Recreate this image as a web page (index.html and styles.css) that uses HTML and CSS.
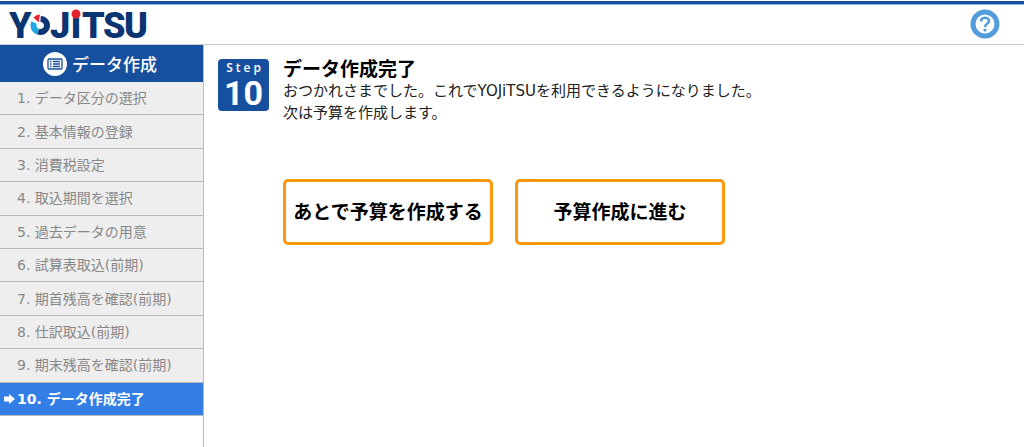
FILE: index.html
```html
<!DOCTYPE html>
<html lang="ja">
  <head>
    <meta charset="utf-8">
    <title>YOJiTSU</title>
    <link rel="stylesheet" href="styles.css">
  </head>
  <body>
    <header class="header">
      <a class="logo" href="#">
        <svg width="140" height="40" viewBox="0 0 140 40" role="img" aria-label="YOJiTSU">
          <g class="logo-text">
            <text x="-1" y="34">Y</text>
            <text x="40" y="34">J</text>
            <text x="61" y="34">i</text>
            <text x="72" y="34">T</text>
            <text x="93" y="34">S</text>
            <text x="114" y="34">U</text>
          </g>
          <!-- ring -->
          <path d="M30.500 15A6.500 6.500 0 1 1 28 27.500" fill="none" stroke="#0b3572" stroke-width="6"/>
          <path d="M28 27.500A6.500 6.500 0 0 1 24 18.500" fill="none" stroke="#1fa8e8" stroke-width="6"/>
          <path d="M29 19L23 13.500Q26 10 30.500 10Z" fill="#e7212b" stroke="#fff" stroke-width="0.800"/>
          <rect x="61" y="4" width="11" height="10" fill="#fff"/>
          <circle cx="66" cy="10" r="4.500" fill="#e7212b"/>
        </svg>
      </a>
      <a class="help" href="#" aria-label="ヘルプ">
        <svg width="30" height="30" viewBox="0 0 30 30">
          <circle cx="15" cy="15" r="12" fill="#fff" stroke="#529cdc" stroke-width="5"/>
          <path d="M11 12.500C11 7.500 19 7.500 19 12C19 15 15 14.500 15 18" fill="none" stroke="#529cdc" stroke-width="2.500"/>
          <circle cx="15" cy="21" r="1.600" fill="#529cdc"/>
        </svg>
      </a>
    </header>
    <div class="wrap">
      <nav class="side">
        <h2 class="side-title">
          <svg width="24" height="24" viewBox="0 0 24 24">
            <circle cx="12" cy="12" r="12" fill="#fff"/>
            <rect x="5" y="7" width="14" height="10" rx="1" fill="none" stroke="#174f9f" stroke-width="1.300"/>
            <path d="M7 9.500h1.500M7 12h1.500M7 14.500h1.500M10 9.500h7M10 12h7M10 14.500h7" stroke="#174f9f" stroke-width="1.300"/>
          </svg>
          データ作成
        </h2>
        <ul class="steps">
          <li>1. データ区分の選択</li>
          <li>2. 基本情報の登録</li>
          <li>3. 消費税設定</li>
          <li>4. 取込期間を選択</li>
          <li>5. 過去データの用意</li>
          <li>6. 試算表取込(前期)</li>
          <li>7. 期首残高を確認(前期)</li>
          <li>8. 仕訳取込(前期)</li>
          <li>9. 期末残高を確認(前期)</li>
          <li class="active">
            <svg width="11" height="10" viewBox="0 0 11 10"><path d="M0 2.500h5V0l6 5-6 5V7.500H0z" fill="#fff"/></svg>
            10. データ作成完了
          </li>
        </ul>
      </nav>
      <main class="main">
        <div class="step-badge">
          <span class="step-word">Step</span>
          <span class="step-num">10</span>
        </div>
        <div class="content">
          <h1>データ作成完了</h1>
          <p>おつかれさまでした。これでYOJiTSUを利用できるようになりました。<br>次は予算を作成します。</p>
          <div class="buttons">
            <button type="button">あとで予算を作成する</button>
            <button type="button">予算作成に進む</button>
          </div>
        </div>
      </main>
    </div>
  </body>
</html>
```
FILE: styles.css
```css
* {
	box-sizing: border-box;
}

body {
	margin: 0;
	min-height: 100vh;
	display: flex;
	flex-direction: column;
	background: #fff;
	color: #222;
	font-family: "DejaVu Sans", "Noto Sans CJK JP", sans-serif;
	font-size: 15px;
}

svg {
	display: block;
	flex: none;
	overflow: visible;
}

/* header */
.header {
	display: flex;
	justify-content: space-between;
	align-items: center;
	height: 44px;
	margin-top: 1px;
	padding: 0 24px 0 10px;
	border-top: 3px solid #174f9f;
	border-bottom: 1px solid #ccc;
	box-shadow: inset 0 1px 0 #8fbce6;
}

.logo-text {
	font-family: Roboto, sans-serif;
	font-size: 36px;
	font-weight: 900;
	fill: #0b3572;
}

.wrap {
	display: flex;
	flex: 1;
}

/* side menu */
.side {
	width: 204px;
	flex: none;
	border-right: 1px solid #bbb;
}

.side-title {
	display: flex;
	justify-content: center;
	align-items: center;
	gap: 5px;
	height: 37px;
	margin: 0;
	padding-right: 3px;
	background: #174f9f;
	color: #fff;
	font-size: 17px;
	font-weight: 500;
}

.steps {
	display: grid;
	grid-auto-rows: 1fr;
	min-height: 334px;
	margin: 0;
	padding: 0;
	list-style: none;
	font-size: 14px;
	line-height: 20px;
}

.steps li {
	display: flex;
	align-items: center;
	padding-left: 17px;
	border-bottom: 1px solid #bbb;
	background: #eee;
	color: #888;
}

.steps .active {
	gap: 2px;
	padding-left: 4px;
	background: #327de6;
	color: #fff;
	font-weight: bold;
}

/* main area */
.main {
	display: flex;
	flex: 1;
	align-items: flex-start;
	gap: 14px;
	padding: 13px 14px;
}

.step-badge {
	display: flex;
	flex-direction: column;
	align-items: center;
	width: 51px;
	margin-top: 1px;
	padding: 1px 0;
	border-radius: 4px;
	background: #174f9f;
	color: #fff;
	font-weight: bold;
}

.step-word {
	padding-left: 3px;
	font-family: "Open Sans", sans-serif;
	font-size: 12px;
	font-weight: 600;
	line-height: 16px;
	letter-spacing: 3px;
}

.step-num {
	font-family: Roboto, sans-serif;
	font-size: 34px;
	line-height: 34px;
}

h1 {
	margin: 0;
	font-size: 19px;
	line-height: 22px;
	color: #000;
}

p {
	margin: 0;
	line-height: 22px;
}

.buttons {
	display: flex;
	flex-wrap: wrap;
	gap: 22px;
	margin-top: 55px;
}

button {
	width: 210px;
	padding: 17px 0;
	border: 3px solid #f8980f;
	border-radius: 5px;
	background: #fff;
	color: #000;
	font-family: inherit;
	font-size: 19px;
	font-weight: bold;
	line-height: 26px;
	white-space: nowrap;
}
```
